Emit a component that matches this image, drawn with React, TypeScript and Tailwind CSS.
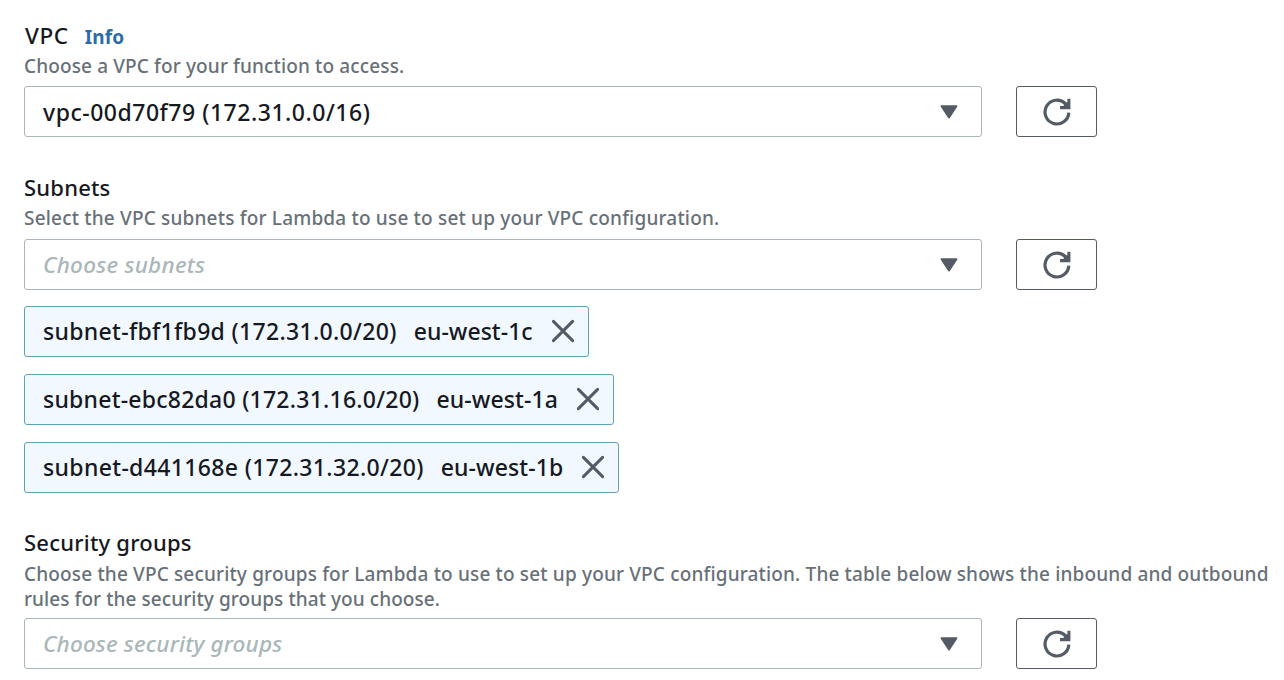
import type { ReactNode } from "react";

function RefreshIcon() {
  return (
    <svg width="28" height="28" viewBox="0 0 28 28" fill="none">
      <path d="M25.8 14.6A11.9 11.9 0 1 1 22.4 5.7" stroke="#545b64" strokeWidth="3.2" />
      <path d="M27.4 0.8V11.2H17V8H20.6L20.8 6.4L23.6 4L24.4 4.6V0.8Z" fill="#545b64" />
    </svg>
  );
}

function CloseIcon() {
  return (
    <svg width="24" height="24" viewBox="0 0 24 24" fill="none" stroke="#545b64" strokeWidth="3" strokeLinecap="round">
      <path d="M2.4 2.4L21.6 21.6M21.6 2.4L2.4 21.6" />
    </svg>
  );
}

function CaretIcon() {
  return (
    <svg width="18" height="14" viewBox="0 0 18 14" fill="#545b64" stroke="#545b64" strokeWidth="2" strokeLinejoin="round">
      <path d="M1.6 1.3H16.4L9 12.5Z" />
    </svg>
  );
}

function SelectRow({ children }: { children: ReactNode }) {
  return (
    <div className="flex gap-[34px]">
      <button className="flex h-[51px] w-[958px] items-center justify-between rounded-[3px] border border-[#aab7b8] bg-white pr-[23px] pl-[18px] text-left leading-8">
        {children}
        <CaretIcon />
      </button>
      <button aria-label="Refresh" className="flex h-[51px] w-[81px] items-center justify-center rounded-[3px] border border-[#545b64] bg-white">
        <RefreshIcon />
      </button>
    </div>
  );
}

function Chip({ children, zone }: { children: ReactNode; zone: ReactNode }) {
  return (
    <div className="flex h-[51px] w-fit items-center rounded-[3px] border border-[#5fa3b5] bg-[#f1f8ff] pr-[13px] pb-px pl-[18px] text-[23px] leading-8 whitespace-nowrap text-[#16191f]">
      {children}
      <span className="ml-[17px] flex">{zone}</span>
      <span className="ml-[18px] flex">
        <CloseIcon />
      </span>
    </div>
  );
}

export default function App() {
  return (
    <main className="flex h-[680px] w-[1284px] flex-col gap-9 overflow-hidden bg-white pt-[21px] pl-6 font-['Noto_Sans',sans-serif] text-[22px] font-medium text-[#16191f]">
      <section>
        <div className="flex h-[33px] items-start gap-4 pl-px">
          <span className="text-[22.5px] leading-[30px] tracking-[0.6px]">VPC</span>
          <a className="text-[19px] leading-8 font-bold tracking-[0.2px] text-[#2a6cab]">Info</a>
        </div>
        <p className="mb-[7px] h-[25px] text-[19px] leading-[25px] font-medium tracking-[0.13px] whitespace-nowrap text-[#687078]">Choose a VPC for your function to access.</p>
        <SelectRow>
          <span className="text-[23px] tracking-[0.52px]">vpc-00d70f79 (172.31.0.0/16)</span>
        </SelectRow>
      </section>
      <section>
        <div className="flex h-[33px] items-start leading-7"><span className="tracking-[0.2px]">Subnets</span></div>
        <p className="mb-2 h-[25px] text-[19px] leading-[25px] font-medium tracking-[0.185px] whitespace-nowrap text-[#687078]">Select the VPC subnets for Lambda to use to set up your VPC configuration.</p>
        <SelectRow>
          <span className="text-[22.5px] tracking-[0.25px] text-[#aab7b8] italic">Choose subnets</span>
        </SelectRow>
        <div className="mt-4 flex flex-col gap-[17px]">
          <Chip zone={<span className="tracking-[0.04px]">eu-west-1c</span>}><span className="tracking-[0.32px]">subnet-fbf1fb9d (172.31.0.0/20)</span></Chip>
          <Chip zone={<span className="tracking-[0.1px]">eu-west-1a</span>}><span className="tracking-[0.24px]">subnet-ebc82da0 (172.31.16.0/20)</span></Chip>
          <Chip zone={<span className="tracking-[0.1px]">eu-west-1b</span>}><span className="tracking-[0.35px]">subnet-d441168e (172.31.32.0/20)</span></Chip>
        </div>
      </section>
      <section>
        <div className="flex h-[33px] items-start leading-[27px]"><span className="tracking-[0.22px]">Security groups</span></div>
        <p className="mb-[6px] text-[19px] leading-[25px] font-medium whitespace-nowrap text-[#687078]">
          <span className="tracking-[0.157px]">Choose the VPC security groups for Lambda to use to set up your VPC configuration. The table below shows the inbound and outbound</span>
          <br />
          <span className="tracking-[0.07px]">rules for the security groups that you choose.</span>
        </p>
        <SelectRow>
          <span className="text-[22.5px] tracking-[0.17px] text-[#aab7b8] italic">Choose security groups</span>
        </SelectRow>
      </section>
    </main>
  );
}
